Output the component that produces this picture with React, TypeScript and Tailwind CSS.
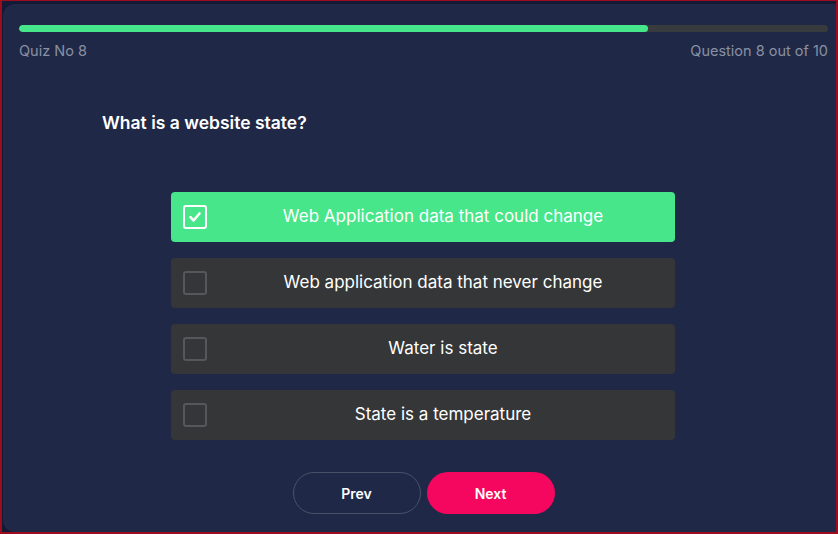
import React from "react";

const options = [
  "Web Application data that could change",
  "Web application data that never change",
  "Water is state",
  "State is a temperature",
];

function Check({ on }: { on: boolean }) {
  return (
    <div
      className={`flex h-6 w-6 shrink-0 items-center justify-center rounded-[3px] border-2 ${
        on ? "border-white" : "border-[#55575a]"
      }`}
    >
      {on && (
        <svg width="14" height="14" viewBox="0 0 14 14" fill="none">
          <path d="M2.5 7.2l3 3.3 6-7" stroke="white" strokeWidth="2.6" strokeLinecap="round" strokeLinejoin="round" />
        </svg>
      )}
    </div>
  );
}

export default function App() {
  const selected = 0;
  return (
    <div
      className="h-[534px] w-[838px] overflow-hidden border-2 border-t border-[#9b0d1e] bg-[#141a36] pl-[1px] pt-[3px]"
      style={{ fontFamily: "Inter, 'Open Sans', sans-serif" }}
    >
      <div className="h-full w-full rounded-tl-xl rounded-bl-xl bg-[#1f2947] pl-4 pr-2 pt-[21px]">
        <div className="h-[7px] w-full overflow-hidden rounded-full bg-[#383b3e]">
          <div className="h-full w-[77.7%] rounded-full bg-[#46e68a]" />
        </div>
        <div className="mt-[8px] flex justify-between text-[14.5px] text-[#8a90a3]">
          <span>Quiz No 8</span>
          <span>Question 8 out of 10</span>
        </div>
        <h1 className="mt-[48px] pl-[83px] text-[17.5px] font-semibold text-white">
          What is a website state?
        </h1>
        <div className="mt-[56px] flex flex-col items-center gap-4 pr-[1px]">
          {options.map((o, i) => (
            <div
              key={o}
              className={`flex h-[50px] w-[504px] items-center rounded-[4px] pl-3 ${
                i === selected ? "bg-[#47e68a]" : "bg-[#353637]"
              }`}
            >
              <Check on={i === selected} />
              <span className="ml-1 flex-1 text-center text-[17px] text-white">{o}</span>
            </div>
          ))}
        </div>
        <div className="mt-[32px] flex justify-center gap-[6px]">
          <button className="h-[42px] w-[128px] rounded-full border border-[#4a5068] text-[14px] font-semibold text-white">
            Prev
          </button>
          <button className="h-[42px] w-[128px] rounded-full bg-[#f5075f] text-[14px] font-semibold text-white">
            Next
          </button>
        </div>
      </div>
    </div>
  );
}
